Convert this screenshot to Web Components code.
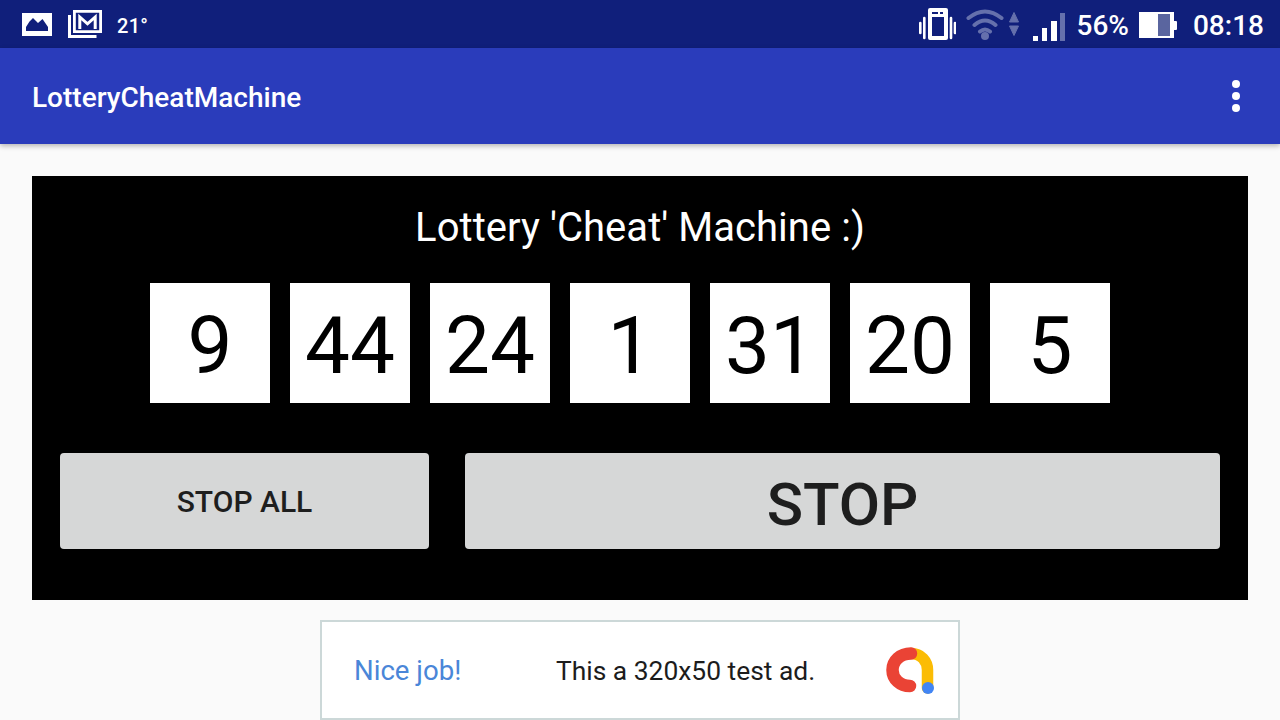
<!DOCTYPE html>
<html>
<head>
<meta charset="utf-8">
<title>LotteryCheatMachine</title>
<style>
  html, body { margin: 0; padding: 0; }
  body { width: 1280px; height: 720px; overflow: hidden; background: #fafafa; font-family: Roboto, sans-serif; }
</style>
</head>
<body>
<status-bar></status-bar>
<app-bar title="LotteryCheatMachine"></app-bar>
<lottery-panel heading="Lottery 'Cheat' Machine :)">
  <number-tile>9</number-tile>
  <number-tile>44</number-tile>
  <number-tile>24</number-tile>
  <number-tile>1</number-tile>
  <number-tile>31</number-tile>
  <number-tile>20</number-tile>
  <number-tile>5</number-tile>
  <stop-button slot="actions" size="small">STOP ALL</stop-button>
  <stop-button slot="actions" size="large">STOP</stop-button>
</lottery-panel>
<test-ad></test-ad>

<script>
class StatusBar extends HTMLElement {
  constructor() {
    super();
    this.attachShadow({ mode: "open" });
    this.shadowRoot.innerHTML = `
    <style>
    :host { display: flex; align-items: center; height: 48px; background: #101f7b; color: #fff; font-family: Roboto, sans-serif; padding: 0 16px 0 22px; }
    svg { display: block; flex: none; }
    .temp { font-size: 20px; font-weight: 500; margin: 3px 0 0 15px; letter-spacing: 0.3px; }
    .grow { flex: 1; }
    .pct { font-size: 28px; font-weight: 500; margin: 3px 0 0 12px; }
    .time { font-size: 28px; font-weight: 500; margin: 3px 0 0 16px; }
    </style>
    <svg width="30" height="24" viewBox="0 0 30 24"><path fill="#fff" fill-rule="evenodd" d="M0 1h30v23H0zM4 19h22v-4l-5.500-8-4.500 4-5-5-3.500 3.500L4 15z"/></svg>
    <svg style="margin-left:15px" width="35" height="28" viewBox="0 0 35 28" fill="none" stroke="#fff"><path stroke-width="3" d="M2.500 5v21.500h27"/><path stroke-width="2.800" d="M7.400 1.400h26.200v20.200H7.400z"/><path stroke-width="3" d="M12.800 19V7l7.700 6.800L28.200 7v12"/></svg>
    <span class="temp">21°</span>
    <span class="grow"></span>
    <svg style="margin-top:-1px" width="37" height="32" viewBox="0 0 37 32"><path fill="none" stroke="#fff" stroke-width="2.600" stroke-linecap="round" d="M1.300 15v10M5.300 10v20M32 10v20M36 15v10"/><path fill="#fff" fill-rule="evenodd" d="M11 0h16a2 2 0 0 1 2 2v28a2 2 0 0 1-2 2H11a2 2 0 0 1-2-2V2a2 2 0 0 1 2-2zM13 9v19h12V9zM13 4v2h6V4zM21 4v2h3V4z"/></svg>
    <svg style="margin-left:10px" width="38" height="32" viewBox="0 0 38 32" fill="none" stroke="#6570ac" stroke-width="4"><path d="M2.500 10Q19-3 35.500 10M8.500 17Q19 8 29.500 17M14 23.500Q19 19.500 24 23.500" stroke-linecap="round"/><circle cx="19" cy="28" r="4" fill="#6570ac" stroke="none"/></svg>
    <svg style="margin-left:5px" width="10" height="24" viewBox="0 0 10 24"><path fill="#6570ac" stroke="#6570ac" stroke-linejoin="round" d="M5 .5l4.500 9.500H.5zM.5 14h9l-4.500 9.500z"/></svg>
    <svg style="margin:6px 0 0 14px" width="32" height="28" viewBox="0 0 32 28"><path fill="#fff" d="M0 23h5v5H0zM9 15h5v13H9zM18 8h6v20h-6z"/><path fill="#6570ac" d="M27 0h5v28h-5z"/></svg>
    <span class="pct">56%</span>
    <svg style="margin:2px 0 0 10px" width="38" height="26" viewBox="0 0 38 26"><path fill="#fff" d="M0 0h35v26H0z"/><path fill="#5a659f" d="M19 2h12v22H19z"/><path fill="#fff" d="M35 9h2a1 1 0 0 1 1 1v7a1 1 0 0 1-1 1h-2z"/></svg>
    <span class="time">08:18</span>
    `;
  }
}
customElements.define("status-bar", StatusBar);

class AppBar extends HTMLElement {
  constructor() {
    super();
    this.attachShadow({ mode: "open" });
    this.shadowRoot.innerHTML = `
    <style>
    :host { display: flex; align-items: center; justify-content: space-between; height: 96px; padding: 0 40px 0 32px; background: #2a3cbb; color: #fff; font-family: Roboto, sans-serif; box-shadow: 0 2px 5px rgba(0,0,0,.28); position: relative; }
    .title { font-size: 28px; font-weight: 500; margin-top: 2px; }
    svg { display: block; }
    </style>
    <span class="title"></span>
    <svg width="8" height="32" viewBox="0 0 8 32" fill="#fff"><circle cx="4" cy="4" r="4"/><circle cx="4" cy="16" r="4"/><circle cx="4" cy="28" r="4"/></svg>
    `;
  }
  connectedCallback() {
    this.shadowRoot.querySelector(".title").textContent = this.getAttribute("title");
  }
}
customElements.define("app-bar", AppBar);

class LotteryPanel extends HTMLElement {
  constructor() {
    super();
    this.attachShadow({ mode: "open" });
    this.shadowRoot.innerHTML = `
    <style>
    :host { display: block; box-sizing: border-box; height: 424px; margin: 32px 32px 0; padding: 28px 28px 0; background: #000; color: #fff; font-family: Roboto, sans-serif; }
    h1 { margin: 0; font-size: 40px; font-weight: 400; line-height: 47px; text-align: center; letter-spacing: 0.04px; }
    .tiles { display: flex; justify-content: center; margin-top: 32px; }
    .actions { display: grid; grid-template-columns: 369px 755px; gap: 36px; margin-top: 50px; }
    </style>
    <h1></h1>
    <div class="tiles"><slot></slot></div>
    <div class="actions"><slot name="actions"></slot></div>
    `;
  }
  connectedCallback() {
    this.shadowRoot.querySelector("h1").textContent = this.getAttribute("heading");
  }
}
customElements.define("lottery-panel", LotteryPanel);

class NumberTile extends HTMLElement {
  constructor() {
    super();
    this.attachShadow({ mode: "open" });
    this.shadowRoot.innerHTML = `
    <style>
    :host { display: flex; align-items: center; justify-content: center; box-sizing: border-box; width: 120px; height: 120px; padding-top: 6px; margin-right: 20px; background: #fff; color: #000; font-size: 80px; }
    </style>
    <slot></slot>
    `;
  }
}
customElements.define("number-tile", NumberTile);

class StopButton extends HTMLElement {
  constructor() {
    super();
    this.attachShadow({ mode: "open" });
    this.shadowRoot.innerHTML = `
    <style>
    :host { display: flex; align-items: center; justify-content: center; box-sizing: border-box; height: 96px; border-radius: 4px; background: #d6d7d7; color: #1e1e1e; font-weight: 500; font-size: 30px; }
    :host([size="large"]) { font-size: 60px; padding-top: 6px; }
    </style>
    <slot></slot>
    `;
  }
}
customElements.define("stop-button", StopButton);

class TestAd extends HTMLElement {
  constructor() {
    super();
    this.attachShadow({ mode: "open" });
    this.shadowRoot.innerHTML = `
    <style>
    :host { display: flex; align-items: center; box-sizing: border-box; width: 640px; height: 100px; margin: 20px auto 0; padding: 0 23px 0 32px; background: #fff; border: 2px solid #ccd8d8; font-family: Roboto, sans-serif; }
    .nice { color: #4a86d8; width: 202px; font-size: 27.6px; margin-top: 1px; }
    .msg { color: #1c1c1c; flex: 1; font-size: 26.4px; margin-top: 2px; }
    svg { display: block; flex: none; }
    </style>
    <span class="nice">Nice job!</span>
    <span class="msg">This a 320x50 test ad.</span>
    <svg width="50" height="50" viewBox="885 645 50 50" fill="none" stroke-linecap="round"><path d="M911 653.500C921 653.500 927.500 661 927.500 670V688" stroke="#fbbc04" stroke-width="11.500"/><path d="M911 653.500C900 653.500 892.500 661 892.500 670C892.500 679 900 686 910 686" stroke="#ea4335" stroke-width="12.500"/><circle cx="928" cy="688" r="6" fill="#4285f4"/></svg>
    `;
  }
}
customElements.define("test-ad", TestAd);
</script>
</body>
</html>
